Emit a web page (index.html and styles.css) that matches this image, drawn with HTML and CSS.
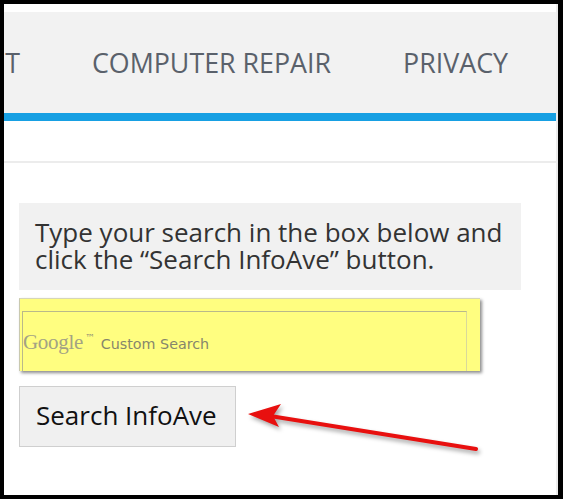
FILE: index.html
```html
<!DOCTYPE html>
<html lang="en">
<head>
  <meta charset="UTF-8" />
  <title>Search - InfoAve</title>
  <meta name="viewport" content="width=device-width, initial-scale=1" />
  <link rel="stylesheet" href="styles.css">
</head>
<body>
  <div class="frame">
    <div class="page">
      <nav class="main-nav">
        <ul>
          <li>ABOUT</li>
          <li>COMPUTER REPAIR</li>
          <li>PRIVACY</li>
        </ul>
      </nav>
      <div class="nav-line"></div>

      <div class="content">
        <div class="intro">
          Type your search in the box below and click the &ldquo;Search InfoAve&rdquo; button.
        </div>

        <div class="highlight">
          <div class="search-box">
            <span class="google">Google<sup>&trade;</sup></span>
            <span class="custom">Custom Search</span>
          </div>
        </div>

        <button type="button" class="search-btn">Search InfoAve</button>
      </div>

      <!-- red pointer drawn on top of the screenshot -->
      <svg class="arrow" width="250" height="66" viewBox="0 0 250 66">
        <line x1="30" y1="19" x2="236" y2="52" stroke="#e8100f" stroke-width="4" stroke-linecap="round" />
        <polygon points="8,17 41,7 33,19 39,30" fill="#e8100f" />
      </svg>
    </div>
  </div>
</body>
</html>
```

FILE: styles.css
```css
:root {
  --nav-bg: #f2f2f2;
  --nav-text: #5a616b;
  --accent: #17a0e3;
  --panel-bg: #f1f1f1;
  --text-color: #333;
  --line: #ececec;
}

* {
  box-sizing: border-box;
  margin: 0;
  padding: 0;
}

body {
  font-family: 'Open Sans', sans-serif;
  background: #000;
  width: 563px;
  height: 499px;
  overflow: hidden;
}

.frame {
  height: 499px;
  border: 4px solid #000;
  border-right-width: 5px;
}

.page {
  position: relative;
  height: 100%;
  background: #fff;
  padding-top: 8px;
  border-right: 2px solid var(--line);
  overflow: hidden;
}

.main-nav {
  background: var(--nav-bg);
  height: 101px;
  overflow: hidden;
}

.main-nav ul {
  list-style: none;
  display: flex;
  justify-content: flex-end;
  align-items: center;
  gap: 72px;
  height: 100%;
  padding-right: 48px;
  white-space: nowrap;
}

.main-nav li {
  font-size: 26.8px;
  color: var(--nav-text);
  flex-shrink: 0;
}

.nav-line {
  height: 8px;
  background: var(--accent);
}

.content {
  margin-top: 40px;
  border-top: 2px solid var(--line);
  padding: 40px 15px 0;
}

.intro {
  width: 502px;
  background: var(--panel-bg);
  padding: 16px 16px 17px;
  font-size: 26px;
  line-height: 27px;
  color: var(--text-color);
}

.highlight {
  width: 461px;
  height: 73px;
  margin-top: 8px;
  background: #fffe80;
  border-top: 1px solid #d6d6b8;
  border-left: 1px solid #c9c9b0;
  box-shadow: 2px 2px 3px rgba(0, 0, 0, 0.45);
  padding: 12px 0 0 2px;
}

.search-box {
  width: 445px;
  height: 60px;
  border-top: 1px solid #b9b98a;
  border-left: 1px solid #b9b98a;
  border-right: 1px solid #d9d99a;
  display: flex;
  align-items: center;
  padding-top: 2px;
}

.google {
  font-family: 'Liberation Serif', serif;
  font-size: 21px;
  color: #a3a384;
  letter-spacing: -0.3px;
}

.google sup {
  font-family: 'DejaVu Sans', sans-serif;
  font-size: 10px;
  color: #8f8f74;
  vertical-align: 8px;
  margin-left: 2px;
}

.custom {
  font-family: 'DejaVu Sans', sans-serif;
  font-size: 14.3px;
  color: #86866c;
  margin-left: 6px;
  margin-top: 3px;
}

.search-btn {
  display: block;
  margin-top: 15px;
  width: 217px;
  height: 61px;
  background: #f0f0f0;
  border: 1px solid #cfcfcf;
  font-family: 'Open Sans', sans-serif;
  font-size: 26px;
  color: #111;
  text-align: left;
  padding: 0 0 3px 16px;
}

.arrow {
  position: absolute;
  left: 236px;
  top: 393px;
  filter: drop-shadow(2px 3px 2px rgba(0, 0, 0, 0.35));
}
```
